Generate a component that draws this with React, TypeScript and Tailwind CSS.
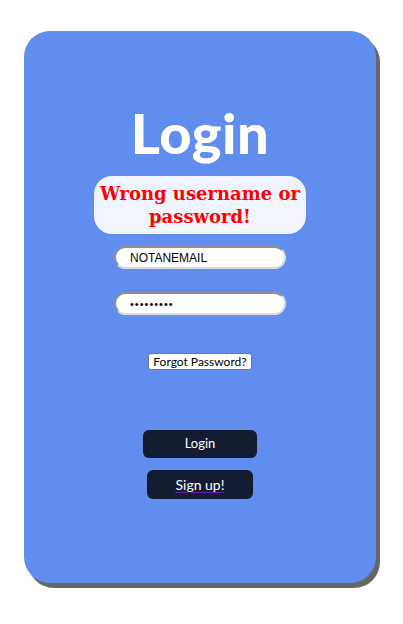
import React from "react";

export default function App() {
  return (
    <div className="w-[403px] h-[624px] bg-white pt-[31px] pl-[24px]">
      <div className="w-[352px] h-[552px] rounded-[26px] bg-[#618dee] shadow-[4px_5px_0_0_#676767] flex flex-col items-center">
        <h1 className="mt-[70px] text-[56px] leading-[63px] text-white font-black font-['Lato','Inter',sans-serif] tracking-[0.5px]">
          Login
        </h1>
        <div className="mt-[12px] w-[212px] h-[58px] rounded-[18px] bg-[#eff4fe] flex items-center justify-center text-center text-[#ff0000] text-[18px] leading-[23px] font-bold font-['DejaVu_Serif','Liberation_Serif',serif]">
          Wrong username or
          <br />
          password!
        </div>
        <input
          className="mt-[12px] w-[172px] h-[23px] rounded-full bg-white border-2 border-t-[#8f8f8f] border-l-[#8f8f8f] border-r-[#dcdcdc] border-b-[#dcdcdc] pl-[14px] text-[12px] text-black outline-none font-['Liberation_Sans',Arial,sans-serif]"
          defaultValue="NOTANEMAIL"
        />
        <input
          type="password"
          className="mt-[23px] w-[172px] h-[23px] rounded-full bg-white border-2 border-t-[#8f8f8f] border-l-[#8f8f8f] border-r-[#dcdcdc] border-b-[#dcdcdc] pl-[14px] text-[11px] tracking-[1px] text-black outline-none font-['Liberation_Sans',Arial,sans-serif]"
          defaultValue="aaaaaaaaa"
        />
        <button className="mt-[38px] w-[104px] h-[17px] rounded-[3px] bg-white border border-[#767676] text-[12px] leading-[15px] text-black font-['Lato','Noto_Sans',sans-serif]">
          Forgot Password?
        </button>
        <button className="mt-[60px] w-[114px] h-[28px] rounded-[6px] bg-[#141c32] text-white text-[13px] font-['Lato','Noto_Sans',sans-serif]">
          Login
        </button>
        <button className="mt-[12px] w-[106px] h-[29px] rounded-[6px] bg-[#141c32] text-white text-[14px] font-['Lato','Noto_Sans',sans-serif]">
          <span className="underline decoration-[#6a1fb0] decoration-1 underline-offset-2">Sign up!</span>
        </button>
      </div>
    </div>
  );
}
